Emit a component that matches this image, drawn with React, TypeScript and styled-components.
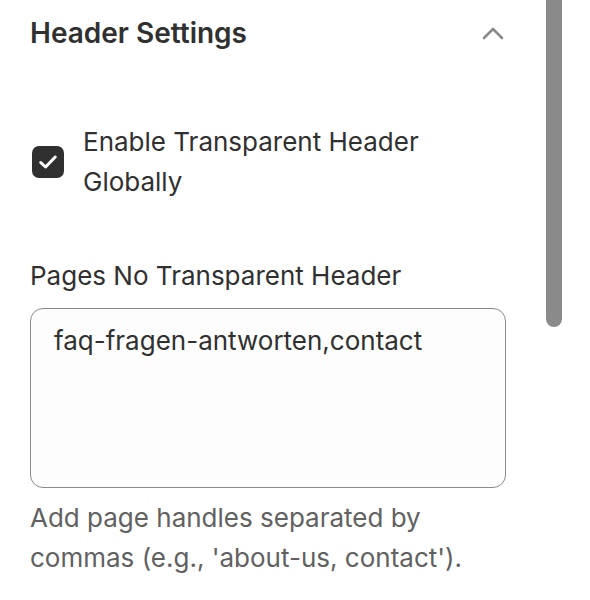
import styled, { createGlobalStyle } from "styled-components";

const GlobalStyle = createGlobalStyle`
  html, body {
    margin: 0;
    padding: 0;
    background: #ffffff;
  }
  body {
    font-family: Inter, "Noto Sans", sans-serif;
    color: #303030;
    -webkit-font-smoothing: antialiased;
  }
`;

function ChevronUp() {
  return (
    <svg width="22" height="14" viewBox="0 0 22 14" fill="none">
      <path
        d="M2 12 L11 3 L20 12"
        stroke="#8a8a8a"
        strokeWidth="2.6"
        strokeLinecap="round"
        strokeLinejoin="round"
      />
    </svg>
  );
}

function CheckMark() {
  return (
    <svg width="18" height="14" viewBox="0 0 18 14" fill="none">
      <path
        d="M1.8 7.6 L6.6 12 L16.2 2"
        stroke="#ffffff"
        strokeWidth="3"
        strokeLinecap="round"
        strokeLinejoin="round"
      />
    </svg>
  );
}

function App() {
  return (
    <>
      <GlobalStyle />
      <Page>
        <Panel>
          <SectionHeader>
            <Title>Header Settings</Title>
            <Toggle aria-label="Collapse">
              <ChevronUp />
            </Toggle>
          </SectionHeader>

          <CheckboxRow>
            <Box>
              <CheckMark />
            </Box>
            <CheckboxLabel>Enable Transparent Header Globally</CheckboxLabel>
          </CheckboxRow>

          <Field>
            <FieldLabel>Pages No Transparent Header</FieldLabel>
            <TextArea defaultValue="faq-fragen-antworten,contact" />
            <HelpText>
              Add page handles separated by commas (e.g., 'about-us, contact').
            </HelpText>
          </Field>
        </Panel>

        <ScrollTrack>
          <ScrollThumb />
        </ScrollTrack>
      </Page>
    </>
  );
}

export default App;

const Page = styled.div`
  display: flex;
  width: 590px;
  height: 600px;
  overflow: hidden;
`;

const Panel = styled.main`
  flex: 0 0 476px;
  padding: 0 0 0 30px;
  display: flex;
  flex-direction: column;
`;

const SectionHeader = styled.header`
  display: flex;
  align-items: center;
  justify-content: space-between;
  height: 66px;
`;

const Title = styled.h2`
  margin: 0;
  font-size: 28px;
  font-weight: 600;
  letter-spacing: 0;
  color: #303030;
`;

const Toggle = styled.button`
  display: flex;
  align-items: center;
  justify-content: center;
  border: none;
  background: none;
  padding: 0;
  margin-right: 2px;
  cursor: pointer;
`;

const CheckboxRow = styled.label`
  display: flex;
  align-items: flex-start;
  gap: 19px;
  margin-top: 56px;
  padding-left: 2px;
`;

const Box = styled.span`
  flex: 0 0 32px;
  width: 32px;
  height: 32px;
  margin-top: 24px;
  border-radius: 7px;
  background: #303030;
  display: flex;
  align-items: center;
  justify-content: center;
`;

const CheckboxLabel = styled.span`
  font-size: 26px;
  line-height: 40px;
  color: #303030;
  max-width: 390px;
`;

const Field = styled.div`
  display: flex;
  flex-direction: column;
  margin-top: 54px;
`;

const FieldLabel = styled.div`
  font-size: 26px;
  line-height: 40px;
  color: #303030;
  margin-bottom: 12px;
`;

const TextArea = styled.textarea`
  box-sizing: border-box;
  width: 476px;
  height: 180px;
  resize: none;
  border: 1px solid #8a8a8a;
  border-radius: 13px;
  background: #fdfdfd;
  padding: 14px 23px;
  font-family: Inter, "Noto Sans", sans-serif;
  font-size: 26px;
  line-height: 36px;
  color: #303030;
  outline: none;
`;

const HelpText = styled.p`
  margin: 10px 0 0;
  font-size: 26px;
  line-height: 40px;
  color: #616161;
  max-width: 440px;
`;

const ScrollTrack = styled.div`
  flex: 0 0 16px;
  margin-left: 40px;
  display: flex;
  flex-direction: column;
`;

const ScrollThumb = styled.div`
  width: 16px;
  height: 327px;
  background: #8a8a8a;
  border-radius: 0 0 8px 8px;
`;
